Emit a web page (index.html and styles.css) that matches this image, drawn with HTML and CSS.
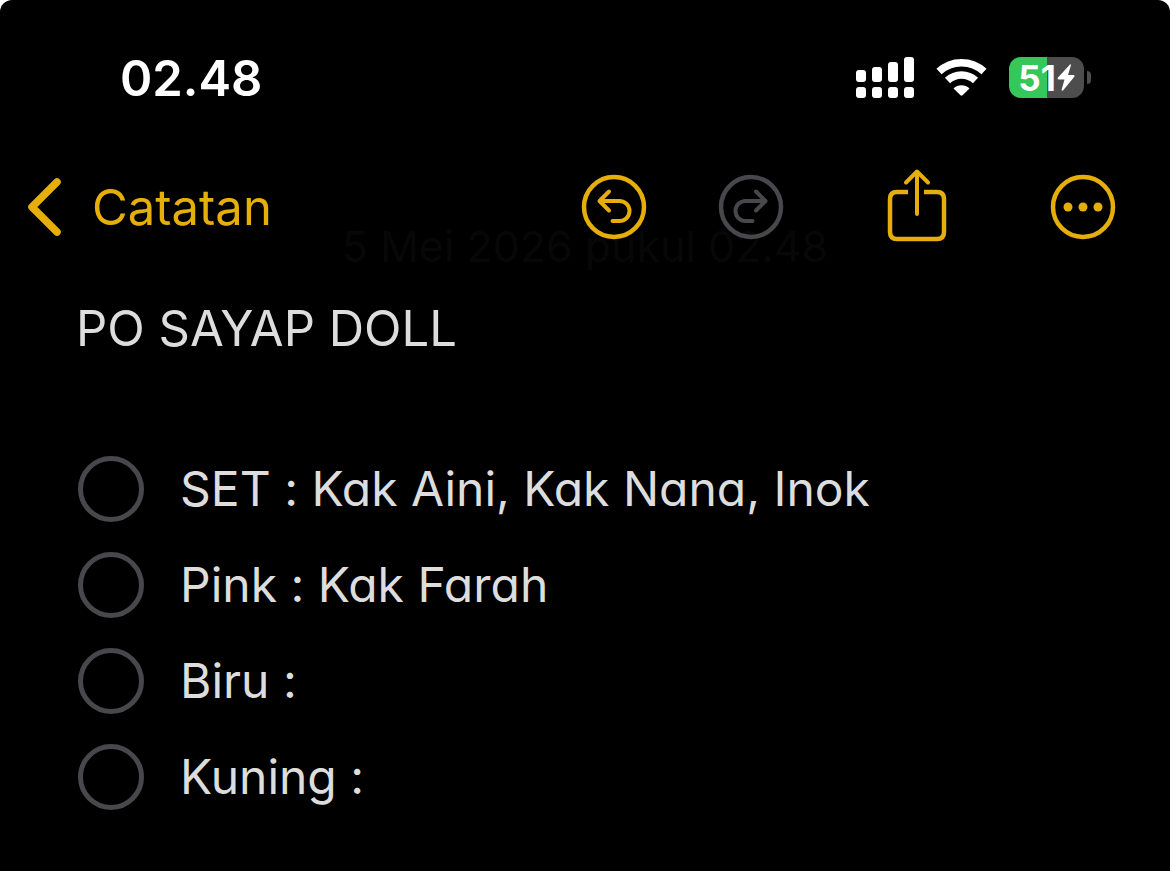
FILE: index.html
```html
<!DOCTYPE html>
<html lang="id">
<head>
  <meta charset="UTF-8" />
  <meta name="viewport" content="width=device-width, initial-scale=1.0"/>
  <title>Catatan</title>
  <link rel="stylesheet" href="styles.css">
</head>
<body>
  <div class="screen">
    <header class="status-bar">
      <time class="clock">02.48</time>
      <div class="status-icons">
        <svg class="signal" width="59" height="42" viewBox="0 0 59 42" fill="#fff">
          <rect x="0" y="13" width="10" height="12" rx="3"/>
          <rect x="16" y="10" width="10" height="15" rx="3"/>
          <rect x="32" y="5" width="10" height="20" rx="3"/>
          <rect x="48" y="0" width="10" height="25" rx="3"/>
          <rect x="0" y="30" width="10" height="11" rx="3"/>
          <rect x="16" y="30" width="10" height="11" rx="3"/>
          <rect x="32" y="30" width="10" height="11" rx="3"/>
          <rect x="48" y="30" width="10" height="11" rx="3"/>
        </svg>
        <svg class="wifi" width="52" height="42" viewBox="0 0 52 42">
          <g fill="none" stroke="#fff" stroke-width="7.500">
            <path d="M3 14.500 A33 33 0 0 1 48 14.500"/>
            <path d="M11.500 23.500 A20.500 20.500 0 0 1 39.500 23.500"/>
          </g>
          <path d="M17.500 31.500 A11.500 11.500 0 0 1 33.500 31.500 L26.500 38.300 Q25.500 39 24.500 38.300 Z" fill="#fff"/>
        </svg>
        <div class="battery">
          <div class="battery-body">
            <span>51</span>
            <svg width="18" height="27" viewBox="0 0 18 27" fill="#fff">
              <path d="M13 .5 L.8 13.800 Q0 15.500 1.500 15.500 H7.500 L4.500 26 Q5 27 6 26.500 L17.500 12.500 Q18 11 16.500 11 H11 L14 1 Q14 0 13 .5 Z"/>
            </svg>
          </div>
          <div class="battery-cap"></div>
        </div>
      </div>
    </header>

    <nav class="toolbar">
      <p class="note-date">5 Mei 2026 pukul 02.48</p>
      <a class="back" href="#">
        <svg width="36" height="60" viewBox="0 0 36 60" fill="none" stroke="currentColor" stroke-width="7.500" stroke-linecap="round" stroke-linejoin="round">
          <path d="M31 5 L6 30 L31 55"/>
        </svg>
        <span>Catatan</span>
      </a>
      <div class="actions">
        <div class="history">
          <button type="button" aria-label="Urungkan">
            <svg width="66" height="66" viewBox="0 0 66 66" fill="none" stroke="currentColor" stroke-width="4.500" stroke-linecap="round" stroke-linejoin="round">
              <circle cx="33" cy="33" r="30"/>
              <path d="M28 17.500 L18.500 27 L28 36.500 M19 27 H38.500 A10 10 0 0 1 38.500 47 H31.500" stroke-width="4"/>
            </svg>
          </button>
          <button type="button" aria-label="Ulangi" disabled>
            <svg width="66" height="66" viewBox="0 0 66 66" fill="none" stroke="currentColor" stroke-width="4.500" stroke-linecap="round" stroke-linejoin="round">
              <circle cx="33" cy="33" r="30"/>
              <path d="M38 17.500 L47.500 27 L38 36.500 M47 27 H27.500 A10 10 0 0 0 27.500 47 H34.500" stroke-width="4"/>
            </svg>
          </button>
        </div>
        <button type="button" aria-label="Bagikan">
          <svg width="66" height="82" viewBox="0 0 66 82" fill="none" stroke="currentColor" stroke-width="4.500" stroke-linejoin="round">
            <path d="M25 26 H14 Q7 26 7 33 V66 Q7 73 14 73 H54 Q61 73 61 66 V33 Q61 26 54 26 H41" transform="translate(-1 0)"/>
            <path d="M33 48 V6 M22 16.500 L33 5.500 L44 16.500" stroke-width="4" stroke-linecap="round"/>
          </svg>
        </button>
        <button type="button" aria-label="Lainnya">
          <svg width="66" height="66" viewBox="0 0 66 66">
            <circle cx="33" cy="33" r="30" fill="none" stroke="currentColor" stroke-width="4.500"/>
            <g fill="currentColor">
              <circle cx="18" cy="33" r="4.500"/>
              <circle cx="33" cy="33" r="4.500"/>
              <circle cx="48" cy="33" r="4.500"/>
            </g>
          </svg>
        </button>
      </div>
    </nav>

    <main class="note">
      <h1>PO SAYAP DOLL</h1>
      <ul class="checklist">
        <li><label><input type="checkbox"><span>SET : Kak Aini, Kak Nana, Inok</span></label></li>
        <li><label><input type="checkbox"><span>Pink : Kak Farah</span></label></li>
        <li><label><input type="checkbox"><span>Biru :</span></label></li>
        <li><label><input type="checkbox"><span>Kuning :</span></label></li>
      </ul>
    </main>
  </div>
</body>
</html>
```
FILE: styles.css
```css
* {
  box-sizing: border-box;
  margin: 0;
  padding: 0;
}

body {
  background: #fff;
  font-family: Inter, "Liberation Sans", sans-serif;
  font-size: 49px;
  color: #ddd;
}

svg {
  display: block;
}

.screen {
  min-height: 100vh;
  background: #000;
  border-radius: 12px 12px 0 0;
}

.status-bar {
  display: flex;
  justify-content: space-between;
  align-items: center;
  height: 156px;
  padding: 0 79px 0 120px;
  color: #fff;
}

.clock {
  font-weight: 600;
}

.status-icons {
  display: flex;
  align-items: flex-start;
}

.wifi {
  margin: 0 21px;
}

.battery {
  display: flex;
  align-items: center;
  gap: 3px;
}

.battery-body {
  display: flex;
  align-items: center;
  justify-content: center;
  gap: 1px;
  width: 75px;
  height: 41px;
  border-radius: 12px;
  background: linear-gradient(to right, #35c759 51%, #4d4d4d 51%);
  font-size: 35px;
  font-weight: 700;
}

.battery-cap {
  width: 4px;
  height: 13px;
  border-radius: 0 4px 4px 0;
  background: #4d4d4d;
}

.toolbar {
  position: relative;
  display: flex;
  justify-content: space-between;
  align-items: center;
  height: 102px;
  padding: 0 54px 0 26px;
}

/* date line, almost faded out under the toolbar */
.note-date {
  position: absolute;
  left: 0;
  right: 0;
  bottom: -18px;
  line-height: 60px;
  font-size: 43px;
  text-align: center;
  color: #070707;
}

.back,
.actions,
.history {
  position: relative;
  display: flex;
  align-items: center;
}

.back {
  gap: 30px;
  color: #e5ae0b;
  text-decoration: none;
}

.actions {
  gap: 100px;
}

.history {
  gap: 71px;
}

.actions button {
  border: none;
  background: none;
  color: #e5ae0b;
  cursor: pointer;
}

.actions button:disabled {
  color: #48474c;
  cursor: default;
}

.note {
  padding: 23px 76px;
  font-feature-settings: "cv11", "calt" 0;
}

.note h1 {
  font-size: 49px;
  font-weight: 400;
  line-height: 96px;
}

.checklist {
  margin-top: 64px;
  list-style: none;
  font-size: 48px;
}

.checklist label {
  display: flex;
  align-items: center;
  gap: 36px;
  line-height: 96px;
}

.checklist input {
  appearance: none;
  flex: none;
  width: 66px;
  height: 66px;
  margin-left: 2px;
  border: 5px solid #48474c;
  border-radius: 50%;
}

.checklist input:checked {
  border-color: #e5ae0b;
  background: #e5ae0b;
}
```
